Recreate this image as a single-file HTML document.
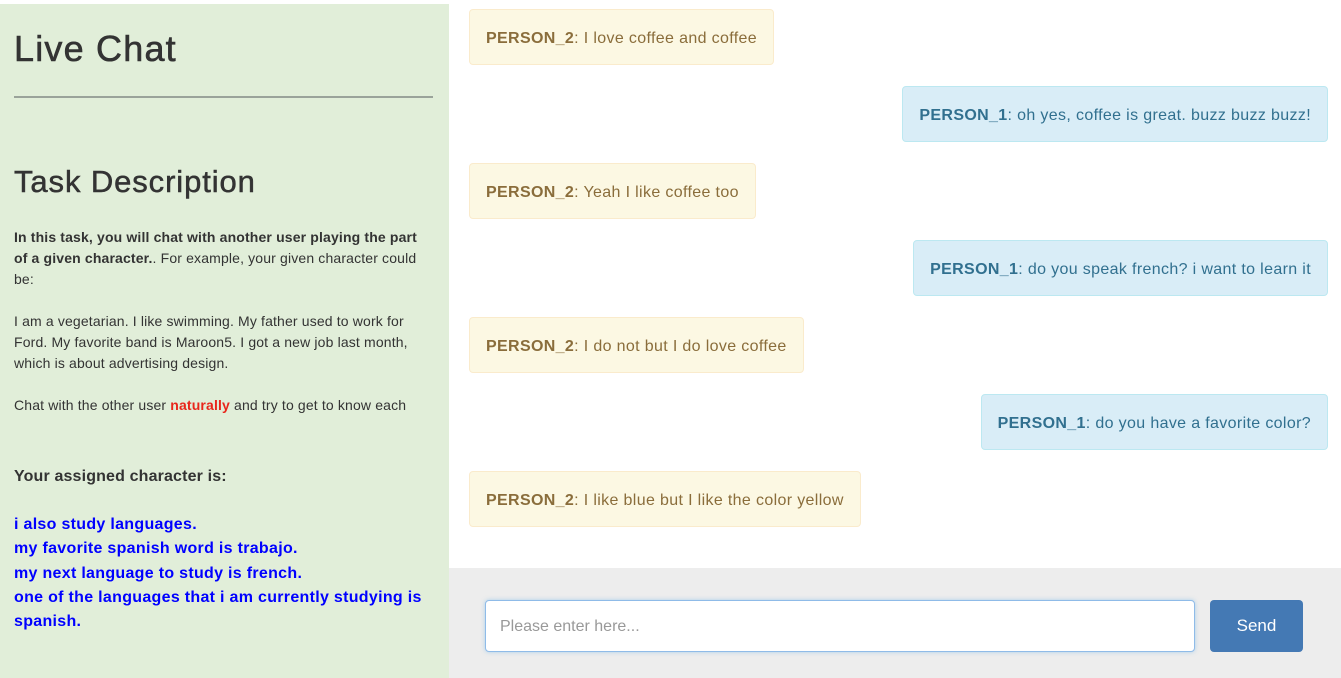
<!DOCTYPE html>
<html><head><meta charset="utf-8"><style>
*{box-sizing:border-box;margin:0;padding:0}
body{width:1341px;height:678px;overflow:hidden;font-family:"Liberation Sans",Arial,sans-serif;background:#fff;position:relative;color:#333}
#left{position:absolute;left:0;top:4px;width:449px;height:674px;background:#e1eed9;padding:0 14px}
h1{position:absolute;left:14px;top:24px;font-size:36px;font-weight:normal;color:#333;letter-spacing:1.2px;-webkit-text-stroke:0.6px #333}
hr{position:absolute;left:14px;top:92px;width:419px;border:0;border-top:2px solid #9aa39a}
h2{position:absolute;left:14px;top:160px;font-size:31px;font-weight:normal;color:#333;letter-spacing:0.9px;-webkit-text-stroke:0.5px #333}
.p{position:absolute;left:14px;width:416px;font-size:14px;line-height:21px;color:#333;letter-spacing:0.15px}
.blue{position:absolute;left:14px;top:509px;width:420px;font-size:16px;line-height:24.3px;color:#0000ff;font-weight:bold;letter-spacing:0.3px}
.b{position:absolute;height:56px;border-radius:4px;font-size:16px;line-height:54px;padding:2px 16px 0;white-space:nowrap;letter-spacing:0.35px}
.w{left:469px;background:#fcf8e3;border:1px solid #faebcc;color:#8a6d3b}
.i{right:13px;background:#d9edf7;border:1px solid #bce8f1;color:#31708f}
#bot{position:absolute;left:449px;top:568px;width:892px;height:110px;background:#ededed}
#inp{position:absolute;left:485px;top:600px;width:710px;height:52px;background:#fff;border:1px solid #8fbbe8;border-radius:4px;box-shadow:0 0 4px rgba(102,175,233,.5);font-size:16px;color:#999;line-height:52px;padding-left:14px}
#btn{position:absolute;left:1210px;top:600px;width:93px;height:52px;background:#4479b4;border-radius:4px;color:#fff;font-size:17px;line-height:52px;text-align:center}
</style></head><body>
<div id="left">
<h1>Live Chat</h1>
<hr>
<h2>Task Description</h2>
<div class="p" style="top:223px"><b>In this task, you will chat with another user playing the part of a given character.</b>. For example, your given character could be:</div>
<div class="p" style="top:307px">I am a vegetarian. I like swimming. My father used to work for Ford. My favorite band is Maroon5. I got a new job last month, which is about advertising design.</div>
<div class="p" style="top:391px">Chat with the other user <b style="color:#e8261b">naturally</b> and try to get to know each</div>
<div class="p" style="top:462px;font-size:16px;font-weight:bold">Your assigned character is:</div>
<div class="blue">i also study languages.<br>my favorite spanish word is trabajo.<br>my next language to study is french.<br>one of the languages that i am currently studying is spanish.</div>
</div>
<div class="b w" style="top:9px"><b>PERSON_2</b>: I love coffee and coffee</div>
<div class="b i" style="top:86px"><b>PERSON_1</b>: oh yes, coffee is great. buzz buzz buzz!</div>
<div class="b w" style="top:163px"><b>PERSON_2</b>: Yeah I like coffee too</div>
<div class="b i" style="top:240px"><b>PERSON_1</b>: do you speak french? i want to learn it</div>
<div class="b w" style="top:317px"><b>PERSON_2</b>: I do not but I do love coffee</div>
<div class="b i" style="top:394px"><b>PERSON_1</b>: do you have a favorite color?</div>
<div class="b w" style="top:471px"><b>PERSON_2</b>: I like blue but I like the color yellow</div>
<div id="bot"></div>
<div id="inp">Please enter here...</div>
<div id="btn">Send</div>
</body></html>
